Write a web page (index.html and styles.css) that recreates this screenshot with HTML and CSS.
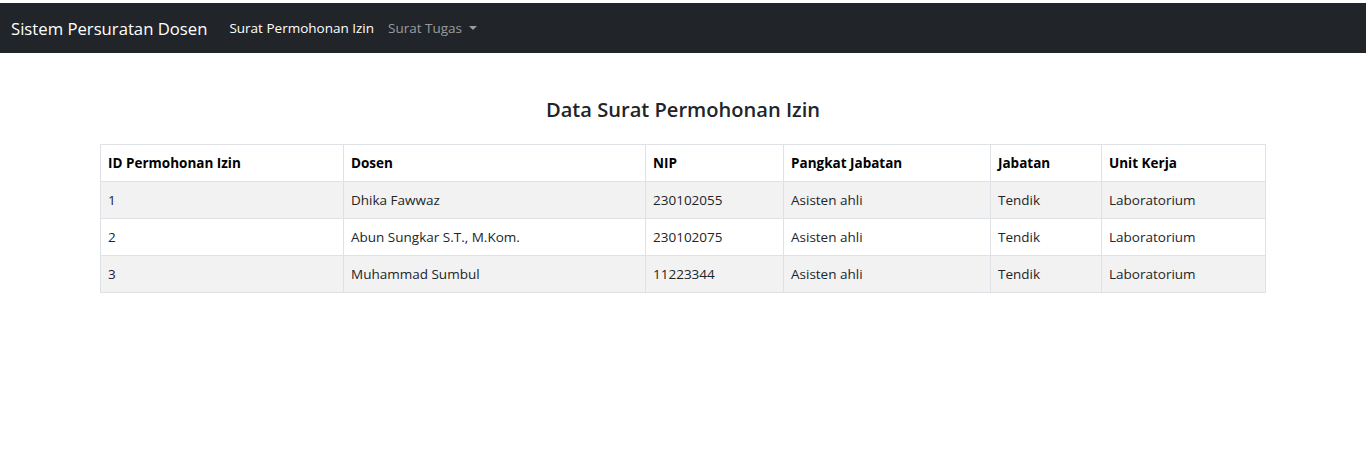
FILE: index.html
```html
<!DOCTYPE html>
<html>
<head>
<meta charset="utf-8">
<link rel="stylesheet" href="styles.css">
</head>
<body>
<nav class="navbar">
  <span class="brand">Sistem Persuratan Dosen</span>
  <span class="nav-link active">Surat Permohonan Izin</span>
  <span class="nav-link dropdown">Surat Tugas <span class="caret"></span></span>
</nav>
<main class="container">
  <h3 class="title">Data Surat Permohonan Izin</h3>
  <table class="table">
    <colgroup>
      <col style="width:243px"><col style="width:302px"><col style="width:138px"><col style="width:207px"><col style="width:111px"><col>
    </colgroup>
    <thead>
      <tr><th>ID Permohonan Izin</th><th>Dosen</th><th>NIP</th><th>Pangkat Jabatan</th><th>Jabatan</th><th>Unit Kerja</th></tr>
    </thead>
    <tbody>
      <tr class="odd"><td>1</td><td>Dhika Fawwaz</td><td>230102055</td><td>Asisten ahli</td><td>Tendik</td><td>Laboratorium</td></tr>
      <tr><td>2</td><td>Abun Sungkar S.T., M.Kom.</td><td>230102075</td><td>Asisten ahli</td><td>Tendik</td><td>Laboratorium</td></tr>
      <tr class="odd"><td>3</td><td>Muhammad Sumbul</td><td>11223344</td><td>Asisten ahli</td><td>Tendik</td><td>Laboratorium</td></tr>
    </tbody>
  </table>
</main>
</body>
</html>
```
FILE: styles.css
```css
html, body {
  margin: 0;
  padding: 0;
  background: #fff;
}
body {
  padding-top: 3px;
  font-family: "Open Sans", "Noto Sans", sans-serif;
  color: #212529;
}
.navbar {
  height: 50px;
  background: #212529;
  display: flex;
  align-items: center;
  padding: 0 11px;
  box-sizing: border-box;
}
.brand {
  color: #fff;
  font-size: 16.7px;
  margin-right: 22px;
}
.nav-link {
  font-size: 13.5px;
  color: rgba(255,255,255,.55);
  margin-right: 14px;
  display: inline-flex;
  align-items: center;
}
.nav-link.active {
  color: #fff;
}
.caret {
  display: inline-block;
  margin-left: 7px;
  border-top: 4.5px solid rgba(255,255,255,.55);
  border-left: 4px solid transparent;
  border-right: 4px solid transparent;
}
.container {
  margin: 0 100px;
  padding-top: 42px;
}
.title {
  margin: 0 0 19px;
  text-align: center;
  font-size: 20.1px;
  font-weight: 600;
  line-height: 30px;
}
.table {
  width: 1166px;
  border-collapse: collapse;
  table-layout: fixed;
  font-size: 13.5px;
}
.table th, .table td {
  border: 1px solid #dee2e6;
  padding: 0 7px;
  height: 36px;
  text-align: left;
  vertical-align: middle;
}
.table th {
  color: #000;
  font-weight: 700;
}
.table tr.odd td {
  background: #f2f2f2;
}
```
